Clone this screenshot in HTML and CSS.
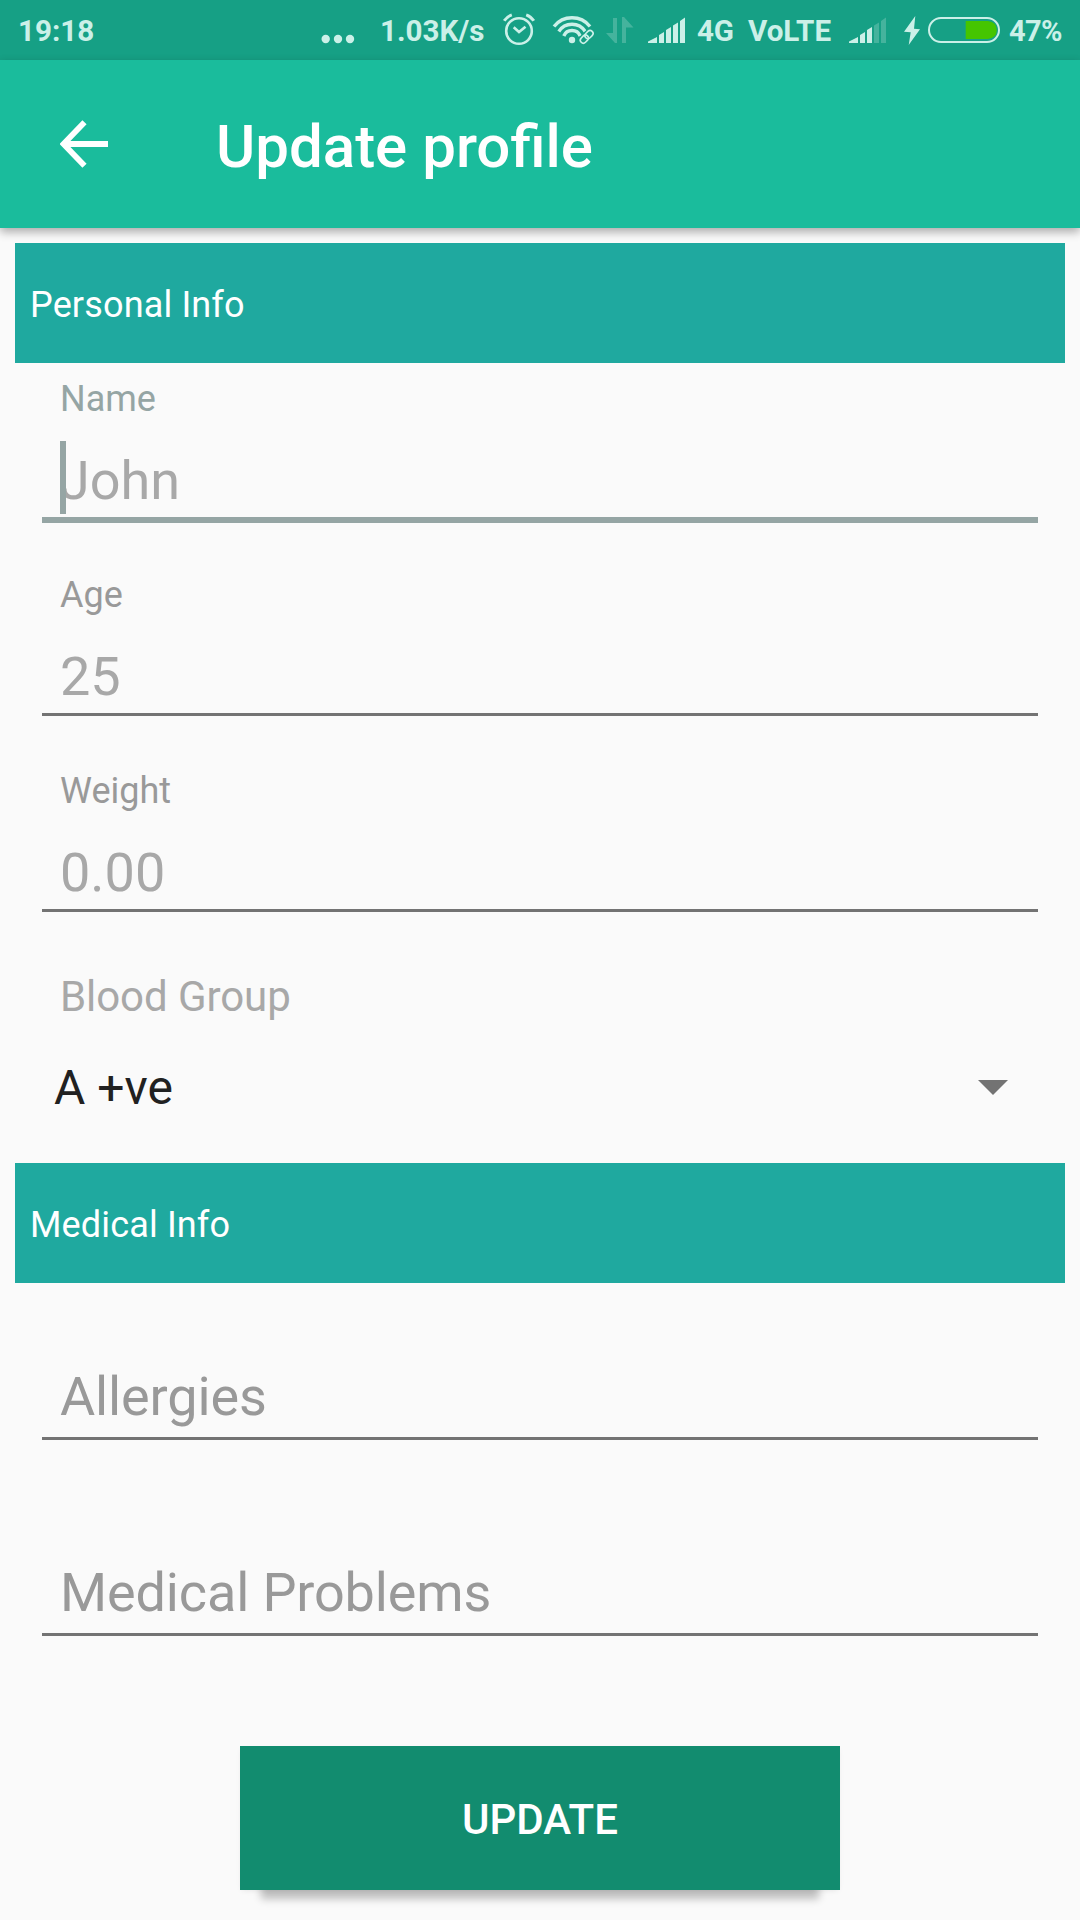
FILE: index.html
```html
<!DOCTYPE html>
<html lang="en">
<head>
<meta charset="utf-8">
<title>Update profile</title>
<link rel="stylesheet" href="styles.css">
</head>
<body>
<div class="status-bar">
  <span class="time">19:18</span>
  <svg width="60" height="60" viewBox="318 0 60 60"><circle cx="325.7" cy="39" r="4.2"/><circle cx="338" cy="39" r="4.2"/><circle cx="350" cy="39" r="4.2"/></svg>
  <span class="speed">1.03K/s</span>
  <svg class="line-icon" width="46" height="60" viewBox="500 0 46 60"><circle cx="519" cy="31" r="12.8" stroke-width="2.6"/><path d="M513.7 27.3L519 32L525.5 26.7" stroke-width="2.6"/><path d="M504.2 20.8Q507 16.5 511.8 14.8M526.2 14.8Q531 16.5 533.8 20.8" stroke-width="3"/></svg>
  <svg class="line-icon" width="54" height="60" viewBox="546 0 54 60"><path d="M554 26.5A23 23 0 0 1 590 26.5M558.8 31.5A15.6 15.6 0 0 1 585.2 31.5M563.8 36A8.9 8.9 0 0 1 580.2 36" stroke-width="3.4"/><circle class="solid" cx="572" cy="40" r="3.2"/><g transform="rotate(-45 586.5 37)"><rect class="link-gap" x="578" y="32" width="17" height="10" rx="5"/><rect x="579" y="34" width="9" height="6" rx="3" stroke-width="1.6"/><rect x="585.5" y="34" width="9" height="6" rx="3" stroke-width="1.6"/></g></svg>
  <svg class="faded" width="42" height="60" viewBox="600 0 42 60"><path d="M613 18H617V43H615L606 33H613ZM622 43V17H624L633.5 27.5H626V43Z"/></svg>
  <svg width="50" height="60" viewBox="642 0 50 60"><path d="M648 43V41.5L657 37V43ZM659 43V35L664 32V43ZM666 43V30L671 27V43ZM673 43V25.5L678 22.5V43ZM680 43V21L685 17.5V43Z"/></svg>
  <span class="network">4G</span>
  <span class="volte">VoLTE</span>
  <svg width="56" height="60" viewBox="842 0 56 60"><path d="M849 43V41.5L858 37V43ZM860 43V35L865 32V43ZM867 43V30L872 27V43Z"/><path class="faded" d="M874 43V25.5L879 22.5V43ZM881 43V21L886 17.5V43Z"/></svg>
  <svg width="26" height="60" viewBox="898 0 26 60"><path d="M915.3 16L904 31.7L910.7 32.3L908.7 45L920 29.3L914 28.7Z"/></svg>
  <svg class="line-icon" width="82" height="60" viewBox="924 0 82 60"><rect x="929" y="18" width="70" height="24" rx="12" stroke-width="2"/><path class="charge" d="M965.7 21H988Q996.8 22 996.8 30T988 39H965.7Z"/></svg>
  <span class="percent">47%</span>
</div>
<header class="app-bar">
  <svg class="back" width="48" height="48" viewBox="0 0 48 48"><path d="M24.5 2.2L3.5 24L24.5 45.8M3.5 24H48" fill="none" stroke="#fff" stroke-width="5.8"/></svg>
  <h1 class="title">Update profile</h1>
</header>
<main class="form">
  <h2 class="section">Personal Info</h2>
  <div class="field focused">
    <div class="label">Name</div>
    <div class="value"><i class="caret"></i>John</div>
  </div>
  <div class="field">
    <div class="label">Age</div>
    <div class="value">25</div>
  </div>
  <div class="field">
    <div class="label">Weight</div>
    <div class="value">0.00</div>
  </div>
  <div class="spinner-label">Blood Group</div>
  <div class="spinner">
    <span>A +ve</span>
    <svg width="30" height="15" viewBox="0 0 30 15"><path d="M0 0H30L15 15Z" fill="#737373"/></svg>
  </div>
  <h2 class="section">Medical Info</h2>
  <div class="hint-field">Allergies</div>
  <div class="hint-field">Medical Problems</div>
  <button class="update">UPDATE</button>
</main>
</body>
</html>
```
FILE: styles.css
```css
* { box-sizing: border-box; }
body {
  margin: 0;
  width: 1080px;
  height: 1920px;
  overflow: hidden;
  background: #fafafa;
  font-family: Roboto, sans-serif;
}
svg { display: block; }

.status-bar {
  display: grid;
  grid-template-columns: 318px 60px 122px 46px 54px 42px 50px 52px 98px 56px 26px 82px 74px;
  height: 60px;
  line-height: 62px;
  background: #16a085;
  color: #cbf0e8;
  fill: #cbf0e8;
  font-size: 29.6px;
  font-weight: 700;
  white-space: nowrap;
}
.time { padding-left: 18px; }
.speed { padding-left: 2px; }
.network { padding-left: 5px; letter-spacing: -.3px; }
.volte { padding-left: 4px; }
.percent { padding-left: 3px; font-size: 29px; letter-spacing: -.7px; }
.line-icon { fill: none; stroke: #cbf0e8; }
.line-icon .solid { fill: #cbf0e8; stroke: none; }
.line-icon .link-gap { fill: #16a085; stroke: none; }
.line-icon .charge { fill: #45c500; stroke: none; }
.faded { fill: #45b39d; }

.app-bar {
  position: relative;
  display: flex;
  align-items: center;
  height: 168px;
  padding-left: 60px;
  background: #1abc9c;
  box-shadow: 0 4px 9px rgba(0, 0, 0, .32);
}
.title {
  margin: 0 0 0 108px;
  padding-top: 5px;
  color: #fff;
  font-size: 60px;
  font-weight: 500;
}

.form { padding-top: 15px; }
.section {
  height: 120px;
  margin: 0 15px;
  padding: 3px 0 0 15px;
  background: #1fa99f;
  color: #fff;
  font-size: 36px;
  font-weight: 400;
  letter-spacing: .15px;
  line-height: 119px;
}
.field {
  height: 196px;
  padding: 15px 42px 0;
}
.label {
  padding-left: 18px;
  color: #999;
  font-size: 36px;
  line-height: 42px;
}
.value {
  position: relative;
  margin-top: 24px;
  padding-left: 18px;
  border-bottom: 3px solid #737373;
  color: #a8a8a8;
  font-size: 54px;
  line-height: 73px;
}
.focused .label { color: #95a5a4; }
.focused .value { border-bottom: 6px solid #95a5a4; }
.caret {
  position: absolute;
  left: 18px;
  top: -3px;
  width: 6px;
  height: 73px;
  background: #95a5a4;
}
.spinner-label {
  padding: 21px 60px 0;
  color: #a8a8a8;
  font-size: 42px;
  letter-spacing: -.08px;
  line-height: 50px;
}
.spinner {
  display: flex;
  align-items: center;
  justify-content: space-between;
  height: 60px;
  margin: 35px 72px 46px 54px;
  color: #212121;
  font-size: 48px;
}
.hint-field {
  margin: 0 42px;
  padding: 113px 0 0 18px;
  border-bottom: 3px solid #737373;
  color: #999;
  font-size: 54px;
  letter-spacing: -.14px;
  line-height: 80px;
}
.section + .hint-field { padding-top: 74px; }
.update {
  display: block;
  width: 600px;
  height: 144px;
  margin: 110px auto 0;
  padding: 2px 0 0;
  border: 0;
  background: #128c6f;
  box-shadow: 0 30px 8px -21px rgba(0, 0, 0, .24), 0 2px 6px -2px rgba(0, 0, 0, .1);
  color: #fff;
  font: 500 42px Roboto, sans-serif;
}
```
